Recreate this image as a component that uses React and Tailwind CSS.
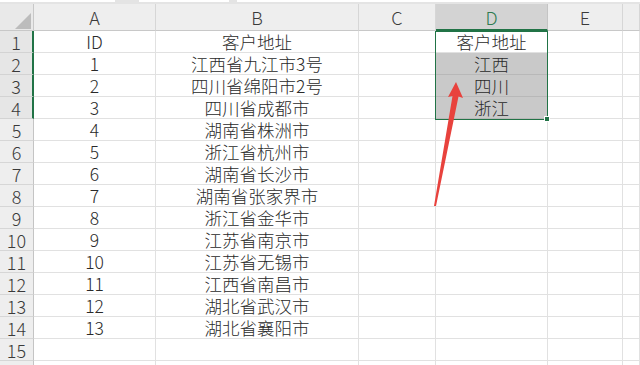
import React from "react"

const cols = ["A", "B", "C", "D", "E", ""]
const rows = [
  ["ID", "客户地址", "", "客户地址"],
  ["1", "江西省九江市3号", "", "江西"],
  ["2", "四川省绵阳市2号", "", "四川"],
  ["3", "四川省成都市", "", "浙江"],
  ["4", "湖南省株洲市"],
  ["5", "浙江省杭州市"],
  ["6", "湖南省长沙市"],
  ["7", "湖南省张家界市"],
  ["8", "浙江省金华市"],
  ["9", "江苏省南京市"],
  ["10", "江苏省无锡市"],
  ["11", "江西省南昌市"],
  ["12", "湖北省武汉市"],
  ["13", "湖北省襄阳市"],
  [],
]

const font = { fontFamily: '"Noto Sans CJK SC", "Noto Sans", sans-serif' }

export default function App() {
  return (
    <div className="relative w-[640px] h-[365px] overflow-hidden bg-white text-[#2a2a2a] font-light" style={font}>
      {/* formula bar remains */}
      <div className="h-[4px] bg-[#e4e4e4] flex gap-[8px] items-start">
        <div className="w-[115px] h-[2px] bg-white" />
        <div className="w-[90px] h-[2px] bg-white ml-[16px]" />
        <div className="flex-1 h-[2px] bg-white" />
      </div>

      <div className="grid grid-cols-[34px_122px_203px_77px_112px_75px_1fr]">
        {/* column headers */}
        <div className="h-[27px] bg-[#e9e9e9] border-r border-b border-[#c8c8c8] relative">
          <svg className="absolute left-0 top-0" width="34" height="27" viewBox="0 0 34 27">
            <polygon points="15,25 31,25 31,9" fill="#bcbcbc" />
          </svg>
        </div>
        {cols.map((c, i) => (
          <div
            key={i}
            className={
              c === "D"
                ? "h-[27px] bg-[#d3d3d3] border-r border-b-2 border-r-[#c4c4c4] border-b-[#217346] flex items-center justify-center text-[18px] leading-none text-[#2f7a50]"
                : "h-[27px] bg-[#eeeeee] border-r border-b border-[#d6d6d6] border-b-[#c8c8c8] flex items-center justify-center text-[18px] leading-none text-[#3a3a3a]"
            }
          >
            {c}
          </div>
        ))}

        {rows.map((r, ri) => (
          <React.Fragment key={ri}>
            <div
              className={
                ri < 4
                  ? "h-[22px] bg-[#e6e6e6] border-r-2 border-b border-r-[#217346] border-b-[#d3d3d3] flex items-center justify-center text-[18px] leading-none text-[#3a3a3a]"
                  : "h-[22px] bg-[#eeeeee] border-r border-b border-r-[#c4c4c4] border-b-[#d6d6d6] flex items-center justify-center text-[18px] leading-none text-[#3a3a3a]"
              }
            >
              {ri + 1}
            </div>
            {[0, 1, 2, 3, 4, 5].map((ci) => (
              <div
                key={ci}
                className={
                  ci === 3 && ri >= 1 && ri <= 3
                    ? "h-[22px] bg-[#c9c9c9] border-r border-b border-[#b8b8b8] flex items-center justify-center text-[17.5px] leading-none"
                    : "h-[22px] border-r border-b border-[#e1e1e1] flex items-center justify-center text-[17.5px] leading-none whitespace-nowrap"
                }
              >
                {r[ci] || ""}
              </div>
            ))}
          </React.Fragment>
        ))}

        {/* partial row below 15 */}
        <div className="h-[8px] bg-[#eeeeee] border-r border-[#c4c4c4]" />
        {[0, 1, 2, 3, 4, 5].map((ci) => (
          <div key={ci} className="h-[8px] border-r border-[#e1e1e1]" />
        ))}
      </div>

      {/* selection D1:D4 */}
      <div className="absolute left-[435px] top-[31px] w-[113px] h-[89px] border-[1.5px] border-[#217346]" />
      <div className="absolute left-[544px] top-[116px] w-[6px] h-[6px] bg-[#217346] border border-white" />

      {/* red arrow */}
      <svg className="absolute left-0 top-0" width="640" height="365" viewBox="0 0 640 365">
        <polygon
          points="456,82 463,98 458.5,96.5 436,206 434,206 452.5,96 448,97"
          fill="#e8423d"
        />
      </svg>
    </div>
  )
}
